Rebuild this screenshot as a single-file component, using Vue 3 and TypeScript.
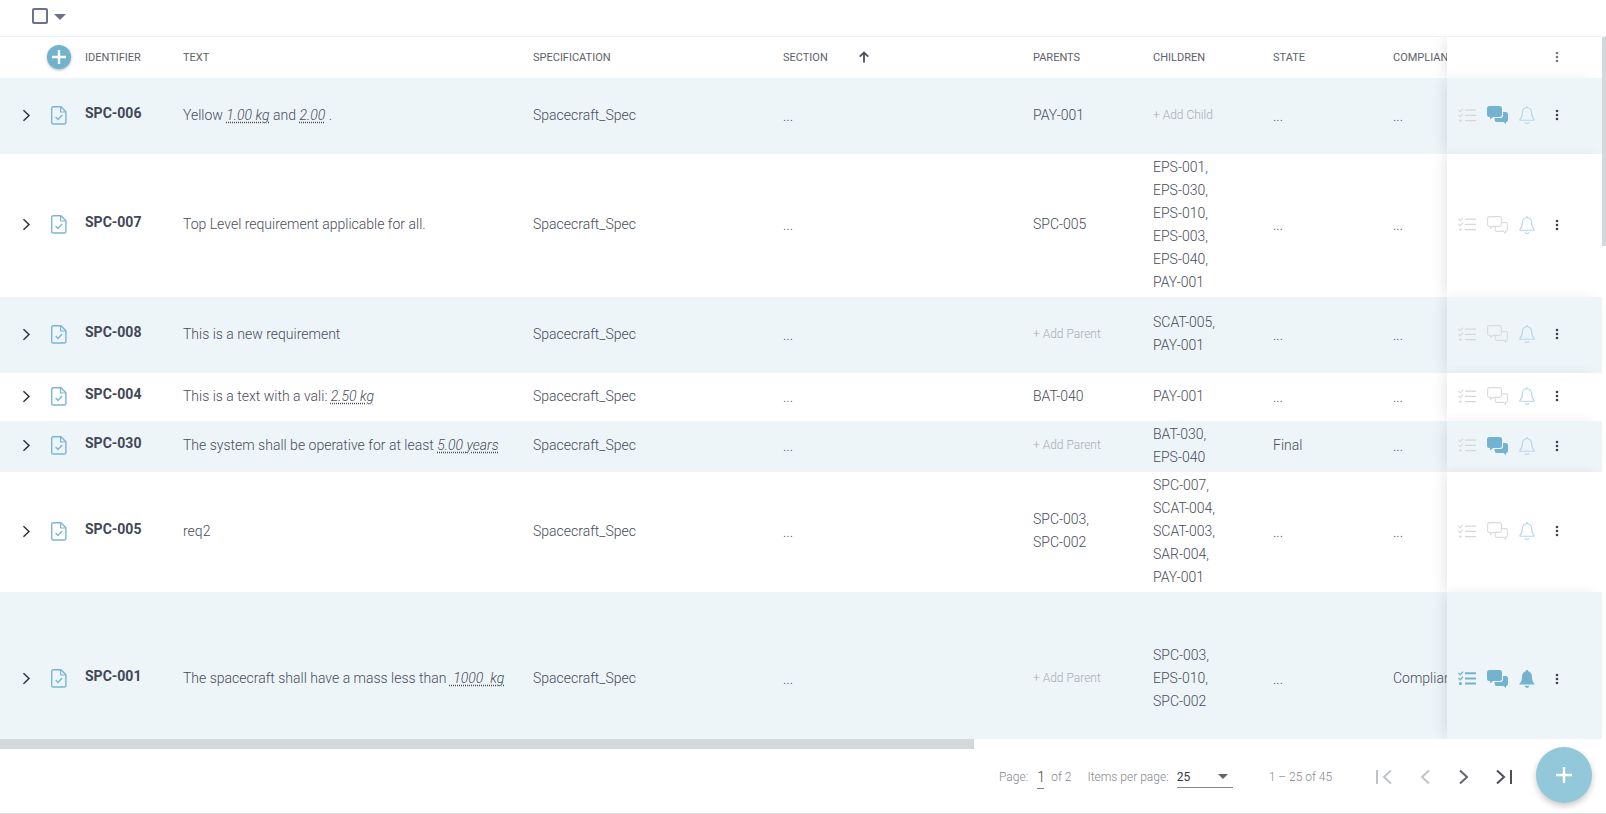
<script setup lang="ts">
interface ValuePart { t: string; v?: boolean }
interface Row {
  id: string
  parts: ValuePart[]
  parents: string[]
  children: string[]
  state: string
  compliance: string
  size: string
  tint: boolean
  list: boolean
  chat: boolean
  bell: boolean
}

const rows: Row[] = [
  { id: 'SPC-006', parts: [{ t: 'Yellow ' }, { t: '1.00 kg', v: true }, { t: ' and ' }, { t: '2.00', v: true }, { t: ' .' }], parents: ['PAY-001'], children: [], state: '...', compliance: '...', size: 'tall', tint: true, list: false, chat: true, bell: false },
  { id: 'SPC-007', parts: [{ t: 'Top Level requirement applicable for all.' }], parents: ['SPC-005'], children: ['EPS-001,', 'EPS-030,', 'EPS-010,', 'EPS-003,', 'EPS-040,', 'PAY-001'], state: '...', compliance: '...', size: 'auto', tint: false, list: false, chat: false, bell: false },
  { id: 'SPC-008', parts: [{ t: 'This is a new requirement' }], parents: [], children: ['SCAT-005,', 'PAY-001'], state: '...', compliance: '...', size: 'tall', tint: true, list: false, chat: false, bell: false },
  { id: 'SPC-004', parts: [{ t: 'This is a text with a vali: ' }, { t: '2.50 kg', v: true }], parents: ['BAT-040'], children: ['PAY-001'], state: '...', compliance: '...', size: 'short', tint: false, list: false, chat: false, bell: false },
  { id: 'SPC-030', parts: [{ t: 'The system shall be operative for at least ' }, { t: '5.00 years', v: true }], parents: [], children: ['BAT-030,', 'EPS-040'], state: 'Final', compliance: '...', size: 'auto', tint: true, list: false, chat: true, bell: false },
  { id: 'SPC-005', parts: [{ t: 'req2' }], parents: ['SPC-003,', 'SPC-002'], children: ['SPC-007,', 'SCAT-004,', 'SCAT-003,', 'SAR-004,', 'PAY-001'], state: '...', compliance: '...', size: 'auto', tint: false, list: false, chat: false, bell: false },
  { id: 'SPC-001', parts: [{ t: 'The spacecraft shall have a mass less than ' }, { t: ' 1000  kg', v: true }], parents: [], children: ['SPC-003,', 'EPS-010,', 'SPC-002'], state: '...', compliance: 'Compliant', size: 'xl', tint: true, list: true, chat: true, bell: true },
]
</script>

<template>
  <div class="page">
    <div class="topbar">
      <span class="checkbox"></span>
      <span class="caret"></span>
    </div>

    <div class="table-area">
      <div class="table">
        <div class="row head">
          <div class="c-exp"></div>
          <div class="c-doc">
            <span class="add-circle">
              <svg width="14" height="14" viewBox="0 0 14 14"><path d="M7 0v14M0 7h14" stroke="#fff" stroke-width="2.4" /></svg>
            </span>
          </div>
          <div class="c-id">Identifier</div>
          <div class="c-text">Text</div>
          <div class="c-spec">Specification</div>
          <div class="c-sec">
            <span>Section</span>
            <svg class="sort" width="12" height="12" viewBox="0 0 12 12"><path d="M6 11.5V1.5M1.8 5.6 6 1.4l4.2 4.2" fill="none" stroke="#4b4f58" stroke-width="1.8" /></svg>
          </div>
          <div class="c-par">Parents</div>
          <div class="c-chi">Children</div>
          <div class="c-sta">State</div>
          <div class="c-com">Compliance</div>
          <div class="c-act head-act">
            <svg class="dots head-dots" width="4" height="12" viewBox="0 0 4 12"><circle cx="2" cy="2" r="1.3" /><circle cx="2" cy="6" r="1.3" /><circle cx="2" cy="10" r="1.3" /></svg>
          </div>
        </div>

        <div v-for="r in rows" :key="r.id" class="row" :class="['size-' + r.size, { tint: r.tint }]">
          <div class="c-exp">
            <svg width="9" height="13" viewBox="0 0 9 13"><path d="M1.5 1.2 7 6.5l-5.5 5.3" fill="none" stroke="#2f3440" stroke-width="1.5" /></svg>
          </div>
          <div class="c-doc">
            <svg width="16" height="19" viewBox="0 0 16 19">
              <path d="M2.3.8h7.6l5 5v10.6a1.6 1.6 0 0 1-1.6 1.6H2.3a1.6 1.6 0 0 1-1.6-1.6V2.4A1.6 1.6 0 0 1 2.3.8z" fill="none" stroke="#7ab6d1" stroke-width="1.4" />
              <path d="M9.6 1v5h5" fill="none" stroke="#7ab6d1" stroke-width="1.2" />
              <path d="m4.6 11 2.4 2.4 4.2-4.4" fill="none" stroke="#7ab6d1" stroke-width="1.4" />
            </svg>
          </div>
          <div class="c-id id-val">{{ r.id }}</div>
          <div class="c-text val"><span class="nowrap"><template v-for="(p, i) in r.parts" :key="i"><span v-if="p.v" class="value">{{ p.t }}</span><template v-else>{{ p.t }}</template></template></span></div>
          <div class="c-spec val">Spacecraft_Spec</div>
          <div class="c-sec val"><span class="muted-dots">...</span></div>
          <div class="c-par val stack">
            <template v-if="r.parents.length"><span v-for="p in r.parents" :key="p">{{ p }}</span></template>
            <span v-else class="add">+ Add Parent</span>
          </div>
          <div class="c-chi val stack">
            <template v-if="r.children.length"><span v-for="c in r.children" :key="c">{{ c }}</span></template>
            <span v-else class="add">+ Add Child</span>
          </div>
          <div class="c-sta val"><span :class="{ 'muted-dots': r.state === '...' }">{{ r.state }}</span></div>
          <div class="c-com val"><span :class="{ 'muted-dots': r.compliance === '...' }">{{ r.compliance }}</span></div>
          <div class="c-act">
            <svg class="ic-list" width="18" height="14" viewBox="0 0 18 14">
              <g v-if="r.list" fill="none" stroke="#73b3cf">
                <path d="m.4 2 1.9 1.8L5 .6M.4 7l1.9 1.8L5 5.6" stroke-width="1.4" />
                <path d="M7 2.2h11M7 7.4h11M7 12.6h11" stroke-width="2" />
                <circle cx="2.4" cy="12.6" r="1.6" fill="#73b3cf" stroke="none" />
              </g>
              <g v-else fill="none" stroke="#d4d8dc">
                <path d="m.4 2 1.9 1.8L5 .6M.4 7l1.9 1.8L5 5.6" stroke-width="1.1" />
                <path d="M7 2.2h11M7 7.4h11M7 12.6h11" stroke-width="1.2" />
                <circle cx="2.4" cy="12.6" r="1.2" fill="#d4d8dc" stroke="none" />
              </g>
            </svg>
            <svg class="ic-chat" width="21" height="18" viewBox="0 0 21 18">
              <g v-if="r.chat" fill="#73b3cf">
                <path d="M2.5 0h10A2.500 2.500 0 0 1 15 2.500v6A2.500 2.500 0 0 1 12.500 11H6l-3 2.600V11h-.5A2.500 2.500 0 0 1 0 8.500v-6A2.500 2.500 0 0 1 2.500 0z" />
                <path d="M16 6h2.800A2.200 2.200 0 0 1 21 8.200v5.600a2.200 2.200 0 0 1-2.200 2.200H19v2l-2.600-2H9.800a2.200 2.200 0 0 1-2.200-2.200V12h5.600A2.800 2.800 0 0 0 16 9.200z" />
              </g>
              <g v-else fill="none" stroke="#d9dcdf" stroke-width="1.1">
                <path d="M2.500.6h10a1.900 1.900 0 0 1 1.900 1.900v6a1.900 1.900 0 0 1-1.900 1.900H6l-2.400 2v-2H2.500A1.900 1.900 0 0 1 .6 8.500v-6A1.900 1.900 0 0 1 2.500.6z" />
                <path d="M14.400 6.600h4.400a1.600 1.600 0 0 1 1.600 1.600v5.600a1.600 1.600 0 0 1-1.600 1.600h-.3v1.800l-2.300-1.800H9.800a1.600 1.600 0 0 1-1.600-1.600v-3.400" />
              </g>
            </svg>
            <svg class="ic-bell" width="16" height="18" viewBox="0 0 16 18">
              <g v-if="r.bell" fill="#73b3cf">
                <path d="M8 0c.7 0 1.200.500 1.200 1.200C11.600 1.800 13 3.900 13 6.400c0 3.800.8 5.600 2.600 7.300.3.400.1.900-.4.900H.8c-.5 0-.7-.5-.4-.9C2.200 12 3 10.200 3 6.400 3 3.900 4.400 1.800 6.800 1.200 6.800.5 7.300 0 8 0z" />
                <path d="M5.600 15.800h4.800A2.500 2.500 0 0 1 8 18a2.500 2.500 0 0 1-2.400-2.200z" />
              </g>
              <g v-else fill="none" stroke="#b4d8e8" stroke-width="1.1">
                <path d="M8 .9c.4 0 .7.300.7.800 2.500.5 3.900 2.300 3.900 4.900 0 3.700.9 5.400 2.600 7 .2.300 0 .6-.3.600H1.100c-.3 0-.5-.3-.3-.6 1.700-1.600 2.600-3.300 2.600-7 0-2.600 1.400-4.400 3.900-4.900 0-.5.3-.8.700-.8z" />
                <path d="M6 16.200c.4.800 1.100 1.300 2 1.300s1.600-.5 2-1.300" />
              </g>
            </svg>
            <svg class="dots" width="4" height="12" viewBox="0 0 4 12"><circle cx="2" cy="2" r="1.3" /><circle cx="2" cy="6" r="1.3" /><circle cx="2" cy="10" r="1.3" /></svg>
          </div>
        </div>
      </div>
      <div class="vscroll"><div class="vthumb"></div></div>
    </div>

    <div class="hscroll"><div class="hthumb"></div></div>

    <div class="footer">
      <span class="pg-label">Page:</span>
      <span class="pg-current">1</span>
      <span class="pg-label pg-of">of 2</span>
      <span class="pg-label pg-items">Items per page:</span>
      <span class="pg-select"><span>25</span><span class="pg-caret"></span></span>
      <span class="pg-label pg-range">1 – 25 of 45</span>
      <span class="pg-nav">
        <svg width="16" height="16" viewBox="0 0 16 16"><path d="M1 1v14M15 1.500 8 8l7 6.500" fill="none" stroke="#bfc3c6" stroke-width="2" /></svg>
        <svg width="12" height="16" viewBox="0 0 12 16"><path d="M10 1.500 3 8l7 6.500" fill="none" stroke="#bfc3c6" stroke-width="2" /></svg>
        <svg width="11" height="16" viewBox="0 0 11 16"><path d="M2 1.500 9 8l-7 6.500" fill="none" stroke="#63666c" stroke-width="2" /></svg>
        <svg width="16" height="16" viewBox="0 0 16 16"><path d="M15 1v14M1 1.500 8 8l-7 6.500" fill="none" stroke="#4d5056" stroke-width="2" /></svg>
      </span>
    </div>

    <div class="fab">
      <svg width="16" height="16" viewBox="0 0 16 16"><path d="M8 0v16M0 8h16" stroke="#fff" stroke-width="2.4" /></svg>
    </div>
  </div>
</template>

<style scoped>
.page {
  position: relative;
  height: 814px;
  box-sizing: border-box;
  border-bottom: 1px solid #dcdfe1;
  display: flex;
  flex-direction: column;
  overflow: hidden;
  font-family: Roboto, "Liberation Sans", sans-serif;
  color: #474c59;
  background: #fff;
}
.topbar {
  height: 36px;
  flex: none;
  box-sizing: border-box;
  padding: 8px 0 0 32px;
  display: flex;
  align-items: flex-start;
}
.checkbox {
  width: 16px;
  height: 16px;
  box-sizing: border-box;
  border: 2px solid #6d7190;
  border-radius: 2px;
}
.caret {
  margin: 6px 0 0 6px;
  border-left: 6px solid transparent;
  border-right: 6px solid transparent;
  border-top: 6px solid #6d7190;
}
.table-area {
  display: flex;
  flex: none;
  height: 702px;
  border-top: 1px solid #edf3f8;
}
.table {
  width: 1602px;
  flex: none;
  overflow: hidden;
}
.vscroll {
  width: 4px;
  flex: none;
}
.vthumb {
  height: 209px;
  background: #d3d8db;
}
.row {
  display: flex;
  align-items: stretch;
  width: 1602px;
}
.row > div {
  display: flex;
  align-items: center;
  box-sizing: border-box;
  flex: none;
}
.head {
  height: 41px;
  font-size: 11px;
  text-transform: uppercase;
  color: #5d6169;
}
.tint { background: #eef5f9; }
.size-tall { min-height: 76px; }
.size-short { min-height: 48px; }
.size-auto { min-height: 48px; padding: 2.500px 0; box-sizing: border-box; }
.size-xl { height: 147px; padding-top: 28px; box-sizing: border-box; }
.size-auto > .c-act { margin: -2.500px 0; }
.row.size-xl > .c-act { margin-top: -28px; padding-top: 28px; }
.c-exp { width: 44px; padding-left: 22px; padding-bottom: 2px; }
.c-doc { width: 41px; padding-left: 7px; padding-bottom: 2px; }
.head .c-doc { padding-left: 3px; }
.c-id { width: 98px; }
.c-text { width: 350px; }
.c-spec { width: 250px; }
.c-sec { width: 250px; }
.c-par, .c-chi, .c-sta { width: 120px; }
.c-com { width: 54px; overflow: hidden; white-space: nowrap; }
.c-act {
  width: 155px;
  padding-left: 11px;
  background-color: #fff;
  box-shadow: -6px 0 12px -3px rgba(70, 80, 90, 0.14);
  position: relative;
  gap: 11px;
}
.tint .c-act { background-color: #eef5f9; }
.row > .c-act { align-items: center; padding-bottom: 2px; }
.head-act { justify-content: flex-end; padding-right: 43px; }
.add-circle {
  width: 24px;
  height: 24px;
  border-radius: 50%;
  background: #71b2cd;
  box-shadow: 0 1px 3px rgba(0, 0, 0, 0.3);
  display: flex;
  align-items: center;
  justify-content: center;
}
.sort { margin: -2px 0 0 30px; }
.id-val {
  font-size: 14px;
  font-weight: 700;
  color: #414757;
  padding-bottom: 7px;
}
.val {
  font-size: 14px;
  font-weight: 300;
  line-height: 23px;
  margin-top: -1px;
  margin-bottom: 1px;
}
.nowrap { white-space: pre; }
.value {
  font-style: italic;
  text-decoration: underline dotted;
  text-underline-offset: 2px;
}
.stack {
  flex-direction: column;
  align-items: flex-start !important;
  justify-content: center;
}
.add {
  font-size: 12px;
  color: #a8acb2;
}
.muted-dots {
  position: relative;
  top: 1px;
}
.dots { fill: #3f434b; margin-left: 9px; }
.head-dots { fill: #77797f; margin-left: 0; }
.ic-list { margin-top: -1px; }
.hscroll {
  height: 10px;
  flex: none;
}
.hthumb {
  width: 974px;
  height: 10px;
  background: #d3d8db;
}
.footer {
  flex: 1;
  display: flex;
  align-items: center;
  padding: 0 0 8px 999px;
  font-size: 12px;
  font-weight: 300;
  color: #85888e;
}
.pg-current {
  margin-left: 9px;
  width: 7px;
  color: #3a3f4a;
  position: relative;
  font-size: 14px;
}
.pg-current::after {
  content: "";
  position: absolute;
  left: 0;
  right: 0;
  bottom: -4px;
  height: 1px;
  background: #7d7f86;
}
.pg-of { margin-left: 7px; }
.pg-items { margin-left: 16px; }
.pg-select {
  margin-left: 8px;
  width: 56px;
  height: 22px;
  box-sizing: border-box;
  border-bottom: 1px solid #8f8790;
  font-size: 12px;
  font-weight: 400;
  color: #333844;
  display: flex;
  align-items: center;
  justify-content: space-between;
  padding-right: 5px;
}
.pg-caret {
  border-left: 5px solid transparent;
  border-right: 5px solid transparent;
  border-top: 5px solid #62656c;
}
.pg-range { margin-left: 36px; }
.pg-nav {
  margin-left: 44px;
  display: flex;
  align-items: center;
  gap: 27px;
}
.fab {
  position: absolute;
  left: 1536px;
  top: 747px;
  width: 56px;
  height: 56px;
  border-radius: 50%;
  background: #93c7da;
  box-shadow: 0 3px 6px rgba(0, 0, 0, 0.22);
  display: flex;
  align-items: center;
  justify-content: center;
}
</style>

<style>
html, body { margin: 0; background: #fff; }
</style>
